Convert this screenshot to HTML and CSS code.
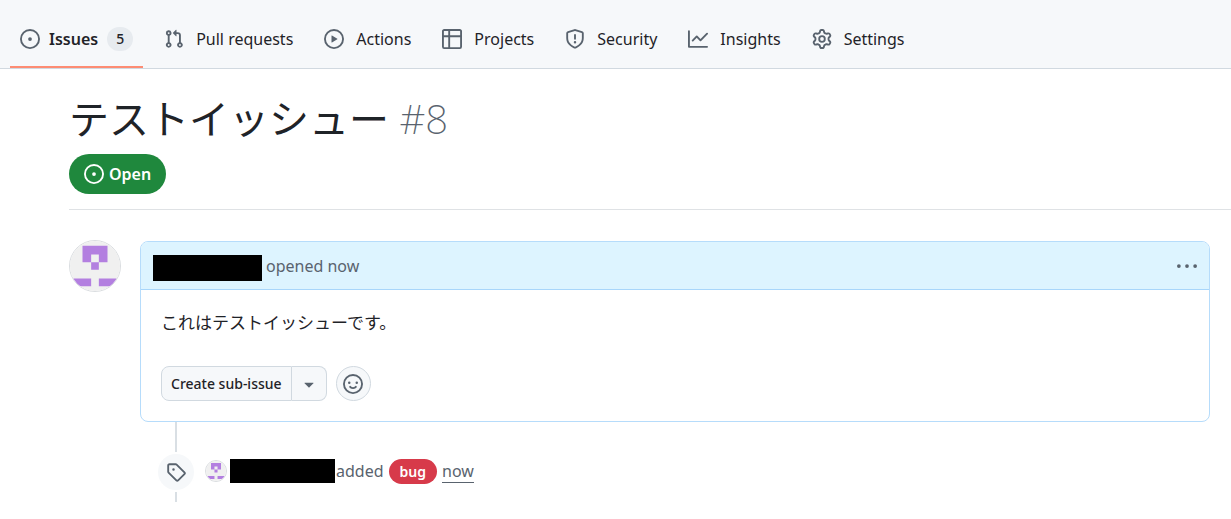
FILE: index.html
```html
<!DOCTYPE html>
<html lang="ja">
<head>
  <meta charset="UTF-8" />
  <meta name="viewport" content="width=device-width, initial-scale=1" />
  <title>テストイッシュー · Issue #8</title>
  <link rel="stylesheet" href="styles.css">
</head>
<body>

  <!-- Icons used more than once -->
  <svg class="sprite" aria-hidden="true">
    <symbol id="icon-issue" viewBox="0 0 16 16">
      <path d="M8 9.5a1.5 1.5 0 1 0 0-3 1.5 1.5 0 0 0 0 3Z"/>
      <path d="M8 0a8 8 0 1 1 0 16A8 8 0 0 1 8 0ZM1.5 8a6.5 6.5 0 1 0 13 0 6.5 6.5 0 0 0-13 0Z"/>
    </symbol>
    <symbol id="identicon" viewBox="0 0 52 52">
      <rect width="52" height="52" fill="#f0f0f0"/>
      <path fill="#b37fe0" fill-rule="evenodd" d="M13 5h26v17h-9v8h-8v-8h-9V5Zm9 9v8h8v-8h-8Z"/>
      <path fill="#b37fe0" d="M0 39h22v8H0zM30 39h22v8H30z"/>
    </symbol>
  </svg>

  <header class="repo-header">
    <nav class="repo-nav" aria-label="Repository">
      <a href="#issues" class="nav-item selected" aria-current="page">
        <svg class="icon" viewBox="0 0 16 16"><use href="#icon-issue"/></svg>
        <span>Issues</span>
        <span class="counter">5</span>
      </a>
      <a href="#pulls" class="nav-item">
        <svg class="icon" viewBox="0 0 16 16"><path d="M1.5 3.25a2.25 2.25 0 1 1 3 2.122v5.256a2.251 2.251 0 1 1-1.5 0V5.372A2.25 2.25 0 0 1 1.5 3.25Zm5.677-.177L9.573.677A.25.25 0 0 1 10 .854V2.5h1A2.5 2.5 0 0 1 13.5 5v5.628a2.251 2.251 0 1 1-1.5 0V5a1 1 0 0 0-1-1h-1v1.646a.25.25 0 0 1-.427.177L7.177 3.427a.25.25 0 0 1 0-.354ZM3.75 2.5a.75.75 0 1 0 0 1.5.75.75 0 0 0 0-1.5Zm0 9.5a.75.75 0 1 0 0 1.5.75.75 0 0 0 0-1.5Zm8.25.75a.75.75 0 1 0 1.5 0 .75.75 0 0 0-1.5 0Z"/></svg>
        <span>Pull requests</span>
      </a>
      <a href="#actions" class="nav-item">
        <svg class="icon" viewBox="0 0 16 16"><path d="M8 0a8 8 0 1 1 0 16A8 8 0 0 1 8 0ZM1.5 8a6.5 6.5 0 1 0 13 0 6.5 6.5 0 0 0-13 0Zm4.879-2.773 4.264 2.559a.25.25 0 0 1 0 .428l-4.264 2.559A.25.25 0 0 1 6 10.559V5.442a.25.25 0 0 1 .379-.215Z"/></svg>
        <span>Actions</span>
      </a>
      <a href="#projects" class="nav-item">
        <svg class="icon" viewBox="0 0 16 16"><path d="M0 1.75C0 .784.784 0 1.75 0h12.5C15.216 0 16 .784 16 1.75v12.5A1.75 1.75 0 0 1 14.25 16H1.75A1.75 1.75 0 0 1 0 14.25ZM6.5 6.5v8h7.75a.25.25 0 0 0 .25-.25V6.5Zm8-1.5V1.75a.25.25 0 0 0-.25-.25H6.5V5Zm-13 1.5v7.75c0 .138.112.25.25.25H5v-8ZM5 5V1.5H1.75a.25.25 0 0 0-.25.25V5Z"/></svg>
        <span>Projects</span>
      </a>
      <a href="#security" class="nav-item">
        <svg class="icon" viewBox="0 0 16 16"><path d="M7.467.133a1.748 1.748 0 0 1 1.066 0l5.25 1.68A1.75 1.75 0 0 1 15 3.48V7c0 1.566-.32 3.182-1.303 4.682-.983 1.498-2.585 2.813-5.032 3.855a1.697 1.697 0 0 1-1.33 0c-2.447-1.042-4.049-2.357-5.032-3.855C1.32 10.182 1 8.566 1 7V3.48a1.75 1.75 0 0 1 1.217-1.667Zm.61 1.429a.25.25 0 0 0-.153 0l-5.25 1.68a.25.25 0 0 0-.174.238V7c0 1.358.275 2.666 1.057 3.86.784 1.194 2.121 2.34 4.366 3.297a.196.196 0 0 0 .154 0c2.245-.956 3.582-2.104 4.366-3.298C13.225 9.666 13.5 8.36 13.5 7V3.48a.251.251 0 0 0-.174-.237l-5.25-1.68ZM8.75 4.75v3a.75.75 0 0 1-1.5 0v-3a.75.75 0 0 1 1.5 0ZM9 10.5a1 1 0 1 1-2 0 1 1 0 0 1 2 0Z"/></svg>
        <span>Security</span>
      </a>
      <a href="#insights" class="nav-item">
        <svg class="icon" viewBox="0 0 16 16"><path d="M1.5 1.75V13.5h13.75a.75.75 0 0 1 0 1.5H.75a.75.75 0 0 1-.75-.75V1.75a.75.75 0 0 1 1.5 0Zm14.28 2.53-5.25 5.25a.75.75 0 0 1-1.06 0L7 7.06 4.28 9.78a.751.751 0 0 1-1.042-.018.751.751 0 0 1-.018-1.042l3.25-3.25a.75.75 0 0 1 1.06 0L10 7.94l4.72-4.72a.751.751 0 0 1 1.042.018.751.751 0 0 1 .018 1.042Z"/></svg>
        <span>Insights</span>
      </a>
      <a href="#settings" class="nav-item">
        <svg class="icon" viewBox="0 0 16 16"><path d="M8 0a8.2 8.2 0 0 1 .701.031C9.444.095 9.99.645 10.16 1.29l.288 1.107c.018.066.079.158.212.224.231.114.454.243.668.386.123.082.233.09.299.071l1.103-.303c.644-.176 1.392.021 1.82.63.27.385.506.792.704 1.218.315.675.111 1.422-.364 1.891l-.814.806c-.049.048-.098.147-.088.294.016.257.016.515 0 .772-.01.147.038.246.088.294l.814.806c.475.469.679 1.216.364 1.891a7.977 7.977 0 0 1-.704 1.217c-.428.61-1.176.807-1.82.63l-1.102-.302c-.067-.019-.177-.011-.3.071a5.909 5.909 0 0 1-.668.386c-.133.066-.194.158-.211.224l-.29 1.106c-.168.646-.715 1.196-1.458 1.26a8.006 8.006 0 0 1-1.402 0c-.743-.064-1.289-.614-1.458-1.26l-.289-1.106c-.018-.066-.079-.158-.212-.224a5.738 5.738 0 0 1-.668-.386c-.123-.082-.233-.09-.299-.071l-1.103.303c-.644.176-1.392-.021-1.82-.63a8.12 8.12 0 0 1-.704-1.218c-.315-.675-.111-1.422.363-1.891l.815-.806c.05-.048.098-.147.088-.294a6.214 6.214 0 0 1 0-.772c.01-.147-.038-.246-.088-.294l-.815-.806C.635 6.045.431 5.298.746 4.623a7.92 7.92 0 0 1 .704-1.217c.428-.61 1.176-.807 1.82-.63l1.102.302c.067.019.177.011.3-.071.214-.143.437-.272.668-.386.133-.066.194-.158.211-.224l.29-1.106C6.009.645 6.556.095 7.299.03 7.53.01 7.764 0 8 0Zm-.571 1.525c-.036.003-.108.036-.137.146l-.289 1.105c-.147.561-.549.967-.998 1.189-.173.086-.34.183-.5.29-.417.278-.97.423-1.529.27l-1.103-.303c-.109-.03-.175.016-.195.045-.22.312-.412.644-.573.99-.014.031-.021.11.059.19l.815.806c.411.406.562.957.53 1.456a4.709 4.709 0 0 0 0 .582c.032.499-.119 1.05-.53 1.456l-.815.806c-.081.08-.073.159-.059.19.162.346.353.677.573.989.02.03.085.076.195.046l1.102-.303c.56-.153 1.113-.008 1.53.27.161.107.328.204.501.29.447.222.85.629.997 1.189l.289 1.105c.029.109.101.143.137.146a6.6 6.6 0 0 0 1.142 0c.036-.003.108-.036.137-.146l.289-1.105c.147-.561.549-.967.998-1.189.173-.086.34-.183.5-.29.417-.278.97-.423 1.529-.27l1.103.303c.109.029.175-.016.195-.045.22-.313.411-.644.573-.99.014-.031.021-.11-.059-.19l-.815-.806c-.411-.406-.562-.957-.53-1.456a4.709 4.709 0 0 0 0-.582c-.032-.499.119-1.05.53-1.456l.815-.806c.081-.08.073-.159.059-.19a6.464 6.464 0 0 0-.573-.989c-.02-.03-.085-.076-.195-.046l-1.102.303c-.56.153-1.113.008-1.53-.27a4.44 4.44 0 0 0-.501-.29c-.447-.222-.85-.629-.997-1.189l-.289-1.105c-.029-.11-.101-.143-.137-.146a6.6 6.6 0 0 0-1.142 0ZM11 8a3 3 0 1 1-6 0 3 3 0 0 1 6 0ZM9.5 8a1.5 1.5 0 1 0-3.001.001A1.5 1.5 0 0 0 9.5 8Z"/></svg>
        <span>Settings</span>
      </a>
    </nav>
  </header>

  <main class="issue">
    <div class="issue-head">
      <h1>テストイッシュー <span class="number">#8</span></h1>
      <span class="state">
        <svg class="icon" viewBox="0 0 16 16"><use href="#icon-issue"/></svg>
        Open
      </span>
    </div>

    <div class="thread">
      <svg class="avatar" viewBox="0 0 52 52"><use href="#identicon"/></svg>

      <div class="timeline">
        <!-- Comment -->
        <article class="comment">
          <div class="comment-header">
            <span class="redacted"></span>
            <span>opened now</span>
            <button class="menu-btn" aria-label="Actions">
              <svg class="icon" viewBox="0 0 16 16"><path d="M8 9.5a1.5 1.5 0 1 0 0-3 1.5 1.5 0 0 0 0 3ZM1.5 9.5a1.5 1.5 0 1 0 0-3 1.5 1.5 0 0 0 0 3Zm13 0a1.5 1.5 0 1 0 0-3 1.5 1.5 0 0 0 0 3Z"/></svg>
            </button>
          </div>
          <div class="comment-body">
            <p>これはテストイッシューです。</p>
            <div class="comment-actions">
              <div class="button-group">
                <button class="btn">Create sub-issue</button>
                <button class="btn btn-caret" aria-label="More options">
                  <svg class="icon" viewBox="0 0 16 16"><path d="m4.427 7.427 3.396 3.396a.25.25 0 0 0 .354 0l3.396-3.396A.25.25 0 0 0 11.396 7H4.604a.25.25 0 0 0-.177.427Z"/></svg>
                </button>
              </div>
              <button class="reaction-btn" aria-label="Add reaction">
                <svg class="icon" viewBox="0 0 16 16"><path d="M8 0a8 8 0 1 1 0 16A8 8 0 0 1 8 0ZM1.5 8a6.5 6.5 0 1 0 13 0 6.5 6.5 0 0 0-13 0Zm3.82 1.636a.75.75 0 0 1 1.038.175l.007.009c.103.118.22.222.35.31.264.178.683.37 1.285.37.602 0 1.02-.192 1.285-.371.13-.088.247-.192.35-.31l.007-.008a.75.75 0 0 1 1.222.87l-.022-.015c.02.013.021.015.021.015v.001l-.001.002-.002.003-.005.007-.014.019a2.066 2.066 0 0 1-.184.213c-.16.166-.338.316-.53.445-.63.418-1.37.638-2.127.629-.946 0-1.652-.308-2.126-.63a3.331 3.331 0 0 1-.715-.657l-.014-.02-.005-.006-.002-.003v-.002h-.001l.613-.432-.614.43a.75.75 0 0 1 .183-1.044ZM12 7a1 1 0 1 1-2 0 1 1 0 0 1 2 0ZM5 8a1 1 0 1 1 0-2 1 1 0 0 1 0 2Z"/></svg>
              </button>
            </div>
          </div>
        </article>

        <!-- Label event -->
        <div class="event">
          <span class="event-badge">
            <svg class="icon" viewBox="0 0 16 16"><path d="M1 7.775V2.75C1 1.784 1.784 1 2.75 1h5.025c.464 0 .91.184 1.238.513l6.25 6.25a1.75 1.75 0 0 1 0 2.474l-5.026 5.026a1.75 1.75 0 0 1-2.474 0l-6.25-6.25A1.752 1.752 0 0 1 1 7.775Zm1.5 0c0 .066.026.13.073.177l6.25 6.25a.25.25 0 0 0 .354 0l5.025-5.025a.25.25 0 0 0 0-.354l-6.25-6.25a.25.25 0 0 0-.177-.073H2.75a.25.25 0 0 0-.25.25ZM6 5a1 1 0 1 1 0 2 1 1 0 0 1 0-2Z"/></svg>
          </span>
          <div class="event-text">
            <svg class="avatar avatar-small" viewBox="0 0 52 52"><use href="#identicon"/></svg>
            <span class="redacted redacted-small"></span>
            <span class="verb">added</span>
            <a href="#bug" class="label">bug</a>
            <a href="#event" class="time">now</a>
          </div>
        </div>
      </div>
    </div>
  </main>

</body>
</html>
```
FILE: styles.css
```css
* {
  box-sizing: border-box;
}
body {
  margin: 0;
  font-family: "Noto Sans", "Noto Sans CJK JP", sans-serif;
  font-size: 16px;
  line-height: 24px;
  color: #1f2328;
  background: #fff;
}
a {
  color: inherit;
  text-decoration: none;
}
button {
  font: inherit;
  color: inherit;
  cursor: pointer;
}

.sprite {
  display: block;
  width: 0;
  height: 0;
}
.icon {
  width: 20px;
  height: 20px;
  flex-shrink: 0;
  fill: currentColor;
}

/* Repository navigation */
.repo-header {
  background: #f6f8fa;
  border-bottom: 1px solid #d1d9e0;
  padding: 12px 10px 0;
}
.repo-nav {
  display: flex;
  gap: 11px;
}
.nav-item {
  display: flex;
  align-items: center;
  gap: 12px;
  height: 56px;
  padding: 0 10px;
  border-bottom: 2px solid transparent;
  white-space: nowrap;
}
.nav-item .icon {
  color: #59636e;
}
.nav-item.selected {
  gap: 9px;
  font-weight: 600;
  border-bottom-color: #fd8c73;
}
.counter {
  min-width: 26px;
  padding: 0 8px;
  border-radius: 12px;
  background: #e7ebef;
  font-size: 14px;
  font-weight: 500;
  text-align: center;
}

/* Issue title */
.issue {
  padding-left: 69px;
}
.issue-head {
  padding: 25px 0 15px;
  border-bottom: 1px solid #dfe2e5;
}
h1 {
  margin: 0 0 10px;
  font-size: 40px;
  font-weight: 400;
  line-height: 50px;
}
.number {
  font-weight: 200;
  color: #59636e;
}
.state {
  display: inline-flex;
  align-items: center;
  gap: 5px;
  height: 40px;
  padding: 0 15px;
  border-radius: 20px;
  background: #1f883d;
  color: #fff;
  font-weight: 600;
  vertical-align: top;
}

/* Thread */
.thread {
  display: flex;
  align-items: flex-start;
  gap: 19px;
  padding: 30px 21px 18px 0;
}
.avatar {
  width: 52px;
  height: 52px;
  flex-shrink: 0;
  border: 1px solid #dadde0;
  border-radius: 50%;
}
.timeline {
  flex: 1;
  padding-top: 1px;
}
.comment {
  border: 1px solid #b6dcfb;
  border-radius: 8px;
  overflow: hidden;
}
.comment-header {
  display: flex;
  align-items: center;
  gap: 4px;
  height: 48px;
  padding: 0 12px;
  background: #ddf4ff;
  border-bottom: 1px solid #a8d6fb;
  color: #59636e;
}
.redacted {
  width: 109px;
  height: 26px;
  margin-top: 4px;
  background: #000;
}
.menu-btn {
  display: flex;
  margin-left: auto;
  padding: 0;
  border: 0;
  background: none;
  color: #59636e;
}
.comment-body {
  padding: 20px;
}
.comment-body p {
  margin: 0 0 30px;
  font-size: 17px;
  line-height: 26px;
}
.comment-actions {
  display: flex;
  gap: 9px;
}
.button-group {
  display: flex;
}
.btn {
  height: 35px;
  padding: 0 9px;
  border: 1px solid #d1d9e0;
  border-radius: 8px 0 0 8px;
  background: #f6f8fa;
  font-size: 14px;
  font-weight: 500;
}
.btn-caret {
  display: flex;
  align-items: center;
  justify-content: center;
  width: 35px;
  padding: 0;
  border-left: 0;
  border-radius: 0 8px 8px 0;
  color: #59636e;
}
.reaction-btn {
  display: flex;
  align-items: center;
  justify-content: center;
  width: 35px;
  height: 35px;
  padding: 0;
  border: 1px solid #d1d9e0;
  border-radius: 50%;
  background: #f6f8fa;
  color: #59636e;
}

/* Timeline event, the line runs behind the badge */
.event {
  position: relative;
  display: flex;
  align-items: center;
  gap: 9px;
  height: 80px;
  padding: 20px 0 0 16px;
}
.event::before {
  content: "";
  position: absolute;
  top: 0;
  bottom: 0;
  left: 35px;
  width: 2px;
  background: #d9dfe4;
}
.event-badge {
  position: relative;
  display: flex;
  align-items: center;
  justify-content: center;
  width: 40px;
  height: 40px;
  border: 2px solid #fff;
  border-radius: 50%;
  background: #f6f8fa;
  color: #59636e;
}
.event-text {
  display: flex;
  align-items: center;
  padding-bottom: 2px;
  color: #59636e;
}
.avatar-small {
  width: 22px;
  height: 22px;
  margin-right: 3px;
}
.redacted-small {
  width: 105px;
  height: 24px;
  margin: 0 1px 0 0;
}
.label {
  margin: 0 5px;
  padding: 0 11px;
  border-radius: 13px;
  background: #d73a4a;
  color: #fff;
  font-size: 14px;
  font-weight: 600;
  line-height: 25px;
}
.time {
  line-height: 22px;
  border-bottom: 1px solid #59636e;
}
```
